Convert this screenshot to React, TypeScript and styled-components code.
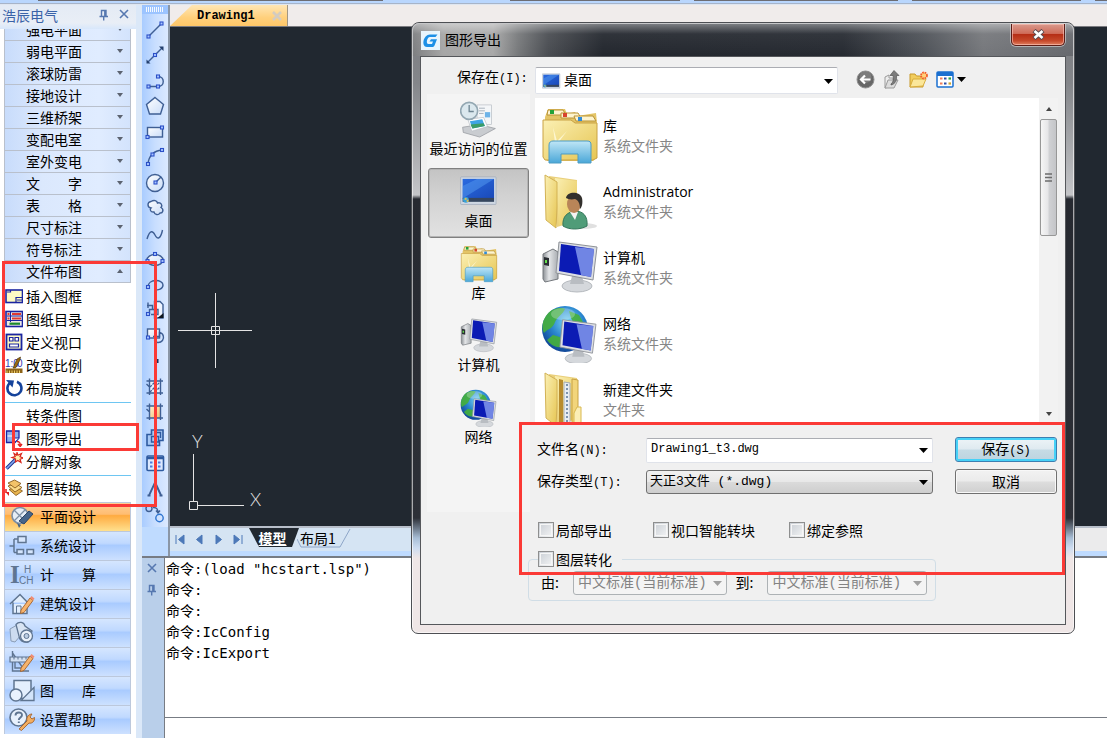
import React from "react";
import styled, { createGlobalStyle } from "styled-components";

const UI = `"Open Sans", "Noto Sans CJK SC", sans-serif`;
const CJK = `"Noto Sans CJK SC", sans-serif`;
const MONO = `"Liberation Mono", "Noto Sans CJK SC", monospace`;
const RED = "#fb3a36";

const GlobalStyle = createGlobalStyle`
  *, *::before, *::after { box-sizing: border-box; }
  body { margin: 0; overflow: hidden; background: #fff; }
  button, input, select { font: inherit; color: inherit; margin: 0; }
  button { padding: 0; border: 0; background: none; }
  svg { display: block; flex: none; }
`;

/* ---------- application shell ---------- */

const Shell = styled.div`
  position: relative;
  display: flex;
  flex-direction: column;
  width: 100%;
  height: 100vh;
  overflow: hidden;
  font: 14px/20px ${CJK};
  color: #000;
`;
const TopStrip = styled.div`
  display: flex;
  gap: 14px;
  flex: none;
  height: 5px;
  padding-left: 38px;
  background: linear-gradient(#b9d6fd 0 3px, #a7b4c8 3px 4px, #dfe6f0 4px);
`;
const StripSegment = styled.span<{ $grow: number; $blank?: boolean }>`
  flex: ${(p) => p.$grow} 0 0;
  height: 1px;
  background: ${(p) => (p.$blank ? "transparent" : "#6c6d74")};
`;
const Body = styled.div`
  display: flex;
  flex: 1;
  min-height: 0;
`;

/* ---------- left palette ---------- */

const Palette = styled.aside`
  display: flex;
  flex-direction: column;
  flex: none;
  width: 136px;
  background: #fff;
`;
const PaletteHeader = styled.header`
  display: flex;
  align-items: center;
  flex: none;
  height: 24px;
  padding: 0 5px 5px 2px;
  background: linear-gradient(#e4ebf5, #e9eef6 18px, #d8e7fb);
  color: #3a63a8;
`;
const PaletteTitle = styled.h2`
  flex: 1;
  margin: 0;
  font: 400 14px/20px ${CJK};
`;
const HeaderButton = styled.button`
  display: flex;
  width: 12px;
  height: 12px;
  margin-left: 8px;
  color: #5678b0;
`;
const GutterButton = styled(HeaderButton)`
  margin-left: 0;
`;
const PaletteBody = styled.div`
  flex: 1;
  min-height: 0;
  overflow: hidden;
  padding: 0 5px 0 4px;
`;
const MenuScroll = styled.nav`
  margin-top: -10px;
`;
const MenuRow = styled.button`
  display: flex;
  align-items: center;
  width: 100%;
  height: 22px;
  padding: 0 7px 2px 21px;
  border: solid #b9c0cc;
  border-width: 0 1px 1px;
  background: linear-gradient(90deg, #c8dcfb, #dbe8fd 30%, #e0ecff 75%, #d3e3fc);
`;
const RowLabel = styled.span`
  flex: 1;
  text-align: left;
  white-space: pre;
`;
const Commands = styled.ul`
  margin: 0;
  padding: 2px 0;
  list-style: none;
`;
const CommandItem = styled.li<{ $ruled?: boolean }>`
  margin-top: ${(p) => (p.$ruled ? "2px" : "0")};
  padding-top: ${(p) => (p.$ruled ? "1px" : "0")};
  border-top: ${(p) => (p.$ruled ? "1px solid #6ec6f2" : "0")};
`;
const CommandButton = styled.button`
  display: flex;
  align-items: center;
  gap: 3px;
  width: 100%;
  height: 23px;
  padding-bottom: 2px;
  white-space: nowrap;
`;
const IconSlot = styled.span`
  width: 18px;
  height: 18px;
  margin-left: 1px;
`;
const CategoryButton = styled.button<{ $active?: boolean }>`
  display: flex;
  align-items: center;
  gap: 5px;
  width: 100%;
  height: 29px;
  padding: 0 0 2px 4px;
  border: solid #bcc8dc;
  border-width: 1px 1px 0;
  white-space: pre;
  background: ${(p) =>
    p.$active
      ? "linear-gradient(#ffcf95, #ffbd72 40%, #ffab40 45%, #ffe08e)"
      : "linear-gradient(#d5e6ff, #c0d9ff 40%, #a9cbff 48%, #cde1ff)"};
`;

/* ---------- workspace ---------- */

const Workspace = styled.main`
  display: flex;
  flex: 1;
  flex-direction: column;
  min-width: 0;
  padding-left: 6px;
  background: linear-gradient(90deg, #dbe8f8 0 6px, #bfdbff 6px);
`;
const DrawingRow = styled.div`
  display: flex;
  flex: 1;
  min-height: 0;
`;
const ToolStrip = styled.div`
  display: flex;
  flex-direction: column;
  flex: none;
  justify-content: space-between;
  align-items: center;
  width: 26px;
  margin-bottom: 29px;
  padding-bottom: 3px;
  background: linear-gradient(90deg, #a9ccff, #c8deff 50%, #dbe9ff);
`;
const Grip = styled.span`
  width: 26px;
  height: 9px;
  padding: 2px 4px;
  background: repeating-linear-gradient(90deg, #f4f9ff 0 1px, transparent 1px 2px) content-box,
    #9cc4ff;
`;
const ToolButton = styled.button`
  display: flex;
  width: 20px;
  height: 20px;
`;
const Sheet = styled.section`
  display: flex;
  flex: 1;
  flex-direction: column;
  min-width: 0;
  border-left: 2px solid #8a96a6;
`;
const TabBar = styled.div`
  flex: none;
  height: 22px;
  background: #f0eceb;
  border-bottom: 1px solid #7b7b80;
`;
const DrawingTab = styled.div`
  display: flex;
  align-items: center;
  width: 118px;
  height: 21px;
  padding-left: 27px;
  clip-path: polygon(0 100%, 22px 0, 100% 0, 100% 100%);
  background: linear-gradient(#ffe6b5, #ffd07c 60%, #ffc768);
  border-right: 1px solid #a09684;
  font: 700 12px/16px ${MONO};
`;
const TabClose = styled.button`
  display: flex;
  width: 10px;
  height: 10px;
  margin-left: 17px;
  color: #d3cbc0;
`;
const Canvas = styled.div`
  position: relative;
  flex: 1;
  min-height: 0;
  overflow: hidden;
  background: #212830;
`;
const Marks = styled.svg`
  position: absolute;
  left: 0;
  bottom: 0;
`;
const LayoutBar = styled.div`
  display: flex;
  align-items: center;
  flex: none;
  height: 25px;
  margin-bottom: 5px;
  padding-left: 5px;
  border-top: 2px solid #b8bfca;
  background: #d5e4f3;
  color: #4d79b8;
`;
const NavButton = styled.button`
  display: flex;
  width: 11px;
  height: 11px;
  margin-right: 8px;
`;
const ModelTab = styled.button`
  align-self: flex-start;
  width: 50px;
  height: 19px;
  margin-left: -2px;
  padding-right: 3px;
  background: #212830;
  clip-path: polygon(0 0, 100% 0, 86% 100%, 20% 100%);
  color: #fff;
  font-weight: 700;
  line-height: 18px;
  text-decoration: underline;
`;
const LayoutTab = styled.button`
  position: relative;
  align-self: flex-start;
  width: 52px;
  height: 19px;
  padding-right: 14px;
  color: #000;
  line-height: 18px;
`;
const TabEdge = styled.svg`
  position: absolute;
  left: -2px;
  top: 0;
`;
const SheetScroll = styled.div`
  flex: 1;
  align-self: stretch;
  margin-left: 80px;
  background: #ebebec;
`;

/* ---------- command window ---------- */

const CommandWindow = styled.section`
  display: flex;
  flex: none;
  height: 182px;
  border-top: 2px solid #777c84;
  background: #fff;
`;
const CommandGutter = styled.div`
  display: flex;
  flex-direction: column;
  align-items: center;
  gap: 9px;
  width: 22px;
  padding-top: 5px;
  background: #b9cfea;
  color: #6384b6;
`;
const CommandMain = styled.div`
  display: flex;
  flex: 1;
  flex-direction: column;
  border-left: 1px solid #777c84;
`;
const History = styled.div`
  flex: 1;
  border-bottom: 1px solid #777c84;
`;
const Line = styled.p`
  margin: 0;
  padding-left: 1px;
  height: 21px;
  font: 14px/20px "DejaVu Sans Mono", monospace;
  white-space: pre;
`;
const Prompt = styled.span`
  font: 14px/20px ${CJK};
`;
const CommandInput = styled.input`
  flex: none;
  width: 100%;
  height: 20px;
  border: 0;
  padding: 0 2px;
  outline: none;
  background: #fff;
`;

/* ---------- dialog ---------- */

const Dialog = styled.section`
  position: absolute;
  left: 411px;
  top: 22px;
  width: 664px;
  padding: 0 8px 8px;
  border: 1px solid #4d4f53;
  border-radius: 8px 8px 7px 7px;
  box-shadow: inset 0 0 0 1px rgba(255, 255, 255, 0.6);
  background: linear-gradient(
    #7b7c80 0,
    #84868a 60px,
    #c4c5c8 172px,
    #262930 176px,
    #2d3037 495px,
    #a8bed6 515px,
    #cddcf0 525px,
    #efe6e6 535px
  );
`;
const TitleBar = styled.header`
  display: flex;
  align-items: flex-start;
  height: 33px;
  margin: 0 -8px;
  padding: 0 8px;
  border: solid #c6c7c9;
  border-width: 1px 1px 0;
  border-radius: 7px 7px 0 0;
  background: linear-gradient(rgba(255, 255, 255, 0.4), rgba(255, 255, 255, 0.06) 10px, transparent),
    linear-gradient(90deg, #7d7e80, #a6a6a6 30px, #a8a8a8 80px, #77797b 105px, #4a4d52 135px, #23272e 190px, #262a31 430px, #4e5258 510px, #75777b 570px, #67696e);
`;
const DialogTitle = styled.h1`
  flex: 1;
  margin: 5px 0 0 5px;
  font: 400 14px/20px ${CJK};
`;
const LogoSlot = styled.span`
  margin-top: 7px;
`;
const CloseButton = styled.button`
  display: flex;
  align-items: center;
  justify-content: center;
  width: 54px;
  height: 22px;
  border: 1px solid #5b1d17;
  border-top: 0;
  border-radius: 0 0 5px 5px;
  box-shadow: inset 0 0 0 1px rgba(255, 200, 190, 0.6), 0 0 0 1px rgba(220, 220, 220, 0.6);
  background: linear-gradient(#d99a8d, #cf6c59 45%, #b52e16 50%, #c6492b 80%, #e08060);
`;
const Client = styled.div`
  padding: 10px 7px 23px 6px;
  border: 1px solid #55575b;
  background: #f0f0f0;
`;
const LookInRow = styled.div`
  display: flex;
  align-items: center;
  height: 27px;
`;
const FieldLabel = styled.label`
  padding-bottom: 2px;
  white-space: nowrap;
`;
const LookInLabel = styled(FieldLabel)`
  flex: none;
  width: 108px;
  padding: 0 0 8px 30px;
`;
const Key = styled.span`
  font: 12px/16px ${MONO};
`;
const ComboWrap = styled.div<{ $width?: number }>`
  position: relative;
  width: ${(p) => (p.$width ? `${p.$width}px` : "auto")};
`;
const Arrow = styled.svg`
  position: absolute;
  right: 5px;
  top: 50%;
  margin-top: -2px;
  pointer-events: none;
`;
const ComboIcon = styled.span`
  position: absolute;
  left: 7px;
  top: 6px;
  pointer-events: none;
`;
const PlainSelect = styled.select`
  appearance: none;
  width: 100%;
  height: 27px;
  padding: 0 20px 3px 28px;
  border: 1px solid #e0e3ea;
  border-top-color: #abadb3;
  border-radius: 2px;
  background: #fff;
`;
const DialogTools = styled.div`
  display: flex;
  align-items: center;
  gap: 8px;
  margin-left: 18px;
  padding-bottom: 2px;
`;
const DialogTool = styled.button`
  display: flex;
  align-items: center;
  gap: 3px;
  height: 20px;
`;
const Browser = styled.div`
  display: flex;
  align-items: flex-start;
  gap: 5px;
`;
const Places = styled.nav`
  display: flex;
  flex-direction: column;
  flex: none;
  gap: 2px;
  width: 103px;
  height: 418px;
  padding: 2px 1px;
  background: #f4f4f4;
`;
const Place = styled.button<{ $selected?: boolean }>`
  display: flex;
  flex-direction: column;
  align-items: center;
  width: 101px;
  height: 70px;
  padding-top: 4px;
  border: 1px solid ${(p) => (p.$selected ? "#808080" : "transparent")};
  border-radius: 3px;
  box-shadow: ${(p) => (p.$selected ? "inset 0 0 0 1px #b4b4b4" : "none")};
  background: ${(p) => (p.$selected ? "linear-gradient(#c4c4c4, #d2d2d2 40%, #e2e2e2)" : "none")};
  line-height: 18px;
  white-space: nowrap;
`;
const PlaceIcon = styled.span`
  display: flex;
  align-items: center;
  height: 38px;
`;
const Pane = styled.div`
  flex: 1;
  min-width: 0;
  padding-top: 4px;
`;
const FileArea = styled.div`
  display: flex;
  height: 326px;
  background: #fff;
`;
const FileList = styled.ul`
  flex: 1;
  margin: 0;
  padding: 5px 0 0 6px;
  overflow: hidden;
  list-style: none;
`;
const FileRow = styled.li`
  display: flex;
  align-items: center;
  gap: 4px;
  height: 66px;
`;
const FileText = styled.div`
  display: flex;
  flex-direction: column;
  font: 14px/20px ${UI};
`;
const FileKind = styled.span`
  color: #868686;
`;
const ScrollBar = styled.div`
  display: flex;
  flex-direction: column;
  align-items: center;
  flex: none;
  width: 19px;
  background: #f2f2f2;
`;
const ScrollButton = styled.button`
  display: flex;
  align-items: center;
  justify-content: center;
  width: 17px;
  height: 21px;
`;
const Thumb = styled.div`
  display: flex;
  align-items: center;
  justify-content: center;
  width: 17px;
  height: 117px;
  border: 1px solid #979797;
  border-radius: 2px;
  background: linear-gradient(90deg, #f6f6f6, #e6e6e8 45%, #d0d1d4 55%, #c4c5c8);
`;
const Spacer = styled.span`
  flex: 1;
`;
const FormGrid = styled.div`
  display: grid;
  grid-template-columns: 109px 287px 102px;
  grid-auto-rows: 25px;
  align-items: center;
  row-gap: 7px;
  padding: 13px 0 0 2px;
`;
const NameInput = styled.input`
  width: 100%;
  height: 25px;
  padding: 0 20px 2px 4px;
  border: 1px solid #e0e3ea;
  border-top-color: #abadb3;
  border-radius: 2px;
  background: #fff;
  font: 12px/16px ${MONO};
`;
const TypeSelect = styled.select`
  appearance: none;
  width: 100%;
  height: 24px;
  padding: 0 20px 0 3px;
  border: 1px solid #707070;
  border-radius: 3px;
  background: linear-gradient(#f1f1f1, #e8e8e8 48%, #dadada 52%, #cecece);
  font: 13px/18px ${MONO};
`;
const PushButton = styled.button<{ $primary?: boolean }>`
  width: 102px;
  height: 25px;
  margin-left: 22px;
  padding-bottom: 2px;
  border: 1px solid ${(p) => (p.$primary ? "#3c7fb1" : "#707070")};
  border-radius: 3px;
  box-shadow: ${(p) => (p.$primary ? "inset 0 0 0 2px #46d1f7" : "inset 0 0 0 1px #f8f8f8")};
  background: ${(p) =>
    p.$primary ? "linear-gradient(#edf4f7, #dfeaf0 48%, #c6dbe5 52%, #bcd3df)" : "linear-gradient(#f2f2f2, #ebebeb 48%, #dddddd 52%, #cfcfcf)"};
`;
const Checks = styled.div`
  display: grid;
  grid-template-columns: 115px 136px auto;
  align-items: center;
  height: 24px;
  margin-top: 24px;
  padding-left: 3px;
`;
const CheckLabel = styled.label`
  display: flex;
  align-items: center;
  gap: 2px;
  height: 24px;
  white-space: nowrap;
`;
const CheckBox = styled.input`
  appearance: none;
  width: 16px;
  height: 16px;
  border: 1px solid #8e8f8f;
  outline: 1px solid #f6f6f6;
  outline-offset: -3px;
  background: linear-gradient(135deg, #c9ced4, #f4f5f6);
`;
const LayerGroup = styled.fieldset`
  width: 408px;
  min-width: 0;
  margin: 5px 0 0 -7px;
  padding: 0 8px 5px 9px;
  border: 1px solid #d0dde6;
  border-radius: 4px;
`;
const LayerLegend = styled.legend`
  padding: 0 10px 0 0;
`;
const LayerRow = styled.div`
  display: flex;
  align-items: center;
  padding-left: 3px;
`;
const StandardLabel = styled(FieldLabel)`
  width: 32px;
`;
const StandardSelect = styled.select`
  appearance: none;
  width: 100%;
  height: 24px;
  padding: 0 16px 0 4px;
  border: 1px solid #adb2b5;
  border-radius: 3px;
  background: #f4f4f4;
  color: #838383;
  opacity: 1;
  font: 14px/18px ${MONO};
`;
const Gap = styled.span`
  width: 9px;
`;
const Highlight = styled.div<{ $x: number; $y: number; $w: number; $h: number }>`
  position: absolute;
  left: ${(p) => p.$x}px;
  top: ${(p) => p.$y}px;
  width: ${(p) => p.$w}px;
  height: ${(p) => p.$h}px;
  border: 3px solid ${RED};
  pointer-events: none;
`;
const Defs = styled.svg`
  position: absolute;
`;

/* ---------- small glyphs ---------- */

const Caret = ({ up, color = "#5c6370" }: { up?: boolean; color?: string }) => (
  <svg width="6" height="4" viewBox="0 0 6 4">
    <path d={up ? "M0 4L3 0L6 4z" : "M0 0H6L3 4z"} fill={color} />
  </svg>
);
const DropArrow = ({ color = "#000" }: { color?: string }) => (
  <Arrow width="9" height="5" viewBox="0 0 9 5">
    <path d="M0 0H9L4.500 5z" fill={color} />
  </Arrow>
);
const Cross = ({ size = 10, w = 2 }: { size?: number; w?: number }) => (
  <svg width={size} height={size} viewBox="0 0 10 10" stroke="currentColor" strokeWidth={w} fill="none">
    <path d="M1 1L9 9M9 1L1 9" />
  </svg>
);
const Pin = () => (
  <svg width="10" height="12" viewBox="0 0 10 12" stroke="currentColor" strokeWidth="1.400" fill="none">
    <path d="M2.500 7V1.500H7V7M5.800 1.500V7M0.500 7.500H9M4.700 7.500V11.500" />
  </svg>
);

/* ---------- drawing tool icons ---------- */

const Node = ({ x, y }: { x: number; y: number }) => (
  <rect x={x - 1.5} y={y - 1.5} width="3" height="3" fill="#a9c6ff" stroke="#2c50c8" strokeWidth="1.100" />
);

const tools: { name: string; art: React.ReactNode }[] = [
  { name: "直线", art: (<><path d="M4 16L16 4" /><Node x={3.5} y={16.5} /><Node x={16.5} y={3.5} /></>) },
  { name: "构造线", art: (<><path d="M3 17L17 3" /><path d="M1.500 14.500V18.500H5.500zM14 1.500H18.500V6z" fill="#25406e" stroke="none" /><Node x={10} y={10} /></>) },
  { name: "多段线", art: (<><path d="M4 15.500H13C20 15.500 20 5.500 13 5.500" /><Node x={3.5} y={15.500} /><Node x={13} y={15.500} /><Node x={13} y={5.500} /></>) },
  { name: "正多边形", art: <path d="M10 1.500L18.500 8.500L15.500 18H4.500L1.500 8.500z" fill="url(#paper)" /> },
  { name: "矩形", art: (<><rect x="2.500" y="5.500" width="15" height="9.500" fill="url(#paper)" /><Node x={2.5} y={15} /><Node x={17} y={5.5} /></>) },
  { name: "圆弧", art: (<><path d="M3 17C3.500 9 9 3.500 17 3" /><Node x={3} y={17} /><Node x={7.5} y={7.5} /><Node x={17} y={3} /></>) },
  { name: "圆", art: (<><circle cx="10" cy="10" r="8.500" fill="url(#paper)" /><path d="M10.500 9.500L16 4" /><Node x={10.5} y={9.5} /></>) },
  { name: "修订云线", art: <path d="M6 3.500C9 1.500 12 2.500 12.500 5C16 4 18 7.500 16 9.500C19.500 11.500 17.500 15.500 15 15C13.500 17.500 9.500 17 9 14C5.500 14.500 4.500 11.500 6 10C2 9.500 2 4 6 3.500z" fill="url(#paper)" /> },
  { name: "样条曲线", art: <path d="M2 15C5 5 8 7 10 11C12.500 16.500 16 14 17.500 6" /> },
  { name: "椭圆", art: (<><ellipse cx="10" cy="11" rx="8" ry="5.500" fill="url(#paper)" /><Node x={10} y={5} /><Node x={2.5} y={12} /><Node x={17.5} y={12} /></>) },
  { name: "椭圆弧", art: (<><path d="M3 12C3 3.500 18 4 18 10C18 14 13 15.500 10 14.500" /><Node x={3} y={12} /></>) },
  { name: "插入块", art: (<><path d="M9.500 1.500H15L18 4.500V18H9.500z" fill="#eef4ff" /><path d="M2 5.500H7.500V9.500H13V14.500H6M7.500 9.500H4.500V14M3 2.500V8" /><path d="M12.500 18H18.500V13z" fill="#101820" stroke="none" /><Node x={3} y={14} /></>) },
  { name: "创建块", art: (<><rect x="2.500" y="3" width="12" height="9" fill="url(#paper)" /><path d="M8 10.500H14.500V6.500C18.500 7 19.500 12 17.500 14.500C15 17.500 10 17 9.500 14" /><Node x={3} y={11.5} /></>) },
  { name: "点", art: <rect x="10.500" y="8" width="3" height="4" fill="#1d2d55" stroke="none" /> },
  { name: "图案填充", art: (<><rect x="4.500" y="4" width="11" height="12" fill="#e4eefe" stroke="none" /><path d="M1.500 4H18M1.500 16H18M4.500 1.500V18M15.500 1.500V18M1.500 7L4.500 10" /><path d="M5 10L10 5M5 15L15 5M10 15L15 10" strokeDasharray="2.500 1" strokeWidth="1.200" /></>) },
  { name: "渐变色", art: (<><rect x="5" y="4" width="11" height="12" fill="url(#sand)" stroke="none" /><path d="M1.500 4H18M1.500 16H18M4.500 1.500V18M15.500 1.500V18M1.500 7L4.500 10" /></>) },
  { name: "面域", art: (<><path d="M6.500 2H18V12.500H14.500V17.500H2V6.500H6.500z" fill="#a8c9f5" stroke="#2f5ba0" strokeWidth="1.600" /><path d="M6.500 8.500H13.500V14H6.500zM9 4.500H15.500V10" stroke="#2f5ba0" /></>) },
  { name: "表格", art: (<><rect x="2" y="3" width="16.500" height="14.500" rx="1" fill="#dce9ff" stroke="#2f5ba0" strokeWidth="1.600" /><path d="M2 5H18" stroke="#2f5ba0" strokeWidth="2.500" /><path d="M5 9.500H7.500M9 9.500H11.500M13 9.500H15.500M5 13.500H7.500M9 13.500H11.500M13 13.500H15.500" stroke="#4f7be0" strokeWidth="2.200" /></>) },
  { name: "多行文字", art: <path d="M4 16.500L10 3.500L16 16.500M14.500 16.500H17.500M2.500 16.500H5.500M11 5L16 16" strokeWidth="1.800" /> },
  { name: "添加选定对象", art: (<><circle cx="4" cy="4.500" r="3" /><path d="M8 3.500C12 3 13 6 13 8M11 6.500L13 9L15 6.500" /><circle cx="14.500" cy="14" r="3.700" stroke="#2f75d0" /></>) },
];

/* ---------- palette command icons ---------- */

const NAVY = "#1b25a0";
const commandIcons: Record<string, React.ReactNode> = {
  frame: (<><rect x="1" y="3" width="16.500" height="12.500" fill="#fdfbc4" stroke={NAVY} strokeWidth="1.600" /><path d="M2 5H5.500V3M17 10.500H11V15" stroke={NAVY} fill="none" strokeWidth="1.200" /><path d="M12 13H17" stroke={NAVY} /></>),
  catalog: (<><rect x="1" y="1.500" width="16.500" height="15" fill="#ece9e6" stroke={NAVY} strokeWidth="1.600" /><path d="M2 6H17M2 10.500H17M5.500 2V12" stroke={NAVY} /><path d="M2.500 4H4.500M7 4H16M2.500 8.500H4.500M7 8.500H16" stroke="#e0392f" strokeWidth="1.800" /><path d="M4.500 13.700H15" stroke="#1c8a2c" strokeWidth="2.200" /></>),
  viewport: (<><rect x="1.500" y="1.500" width="15" height="15" fill="#fdfbc4" stroke={NAVY} strokeWidth="1.800" /><path d="M4.500 4.500H8V8H4.500zM10 4.500H13.500V8H10zM4.500 11H13.500V14H4.500z" fill="#fff" stroke={NAVY} strokeWidth="1.200" /></>),
  scale: (<><rect x="0.500" y="12.500" width="17" height="4.500" fill="#8c6318" /><path d="M2 14.500V17M4.500 14.500V17M7 14.500V17M9.500 14.500V17M12 14.500V17M14.500 14.500V17" stroke="#f2d36a" /><text x="0" y="11" fontFamily="Liberation Sans" fontSize="10" fill="#3136b5">1:0</text><text x="12" y="11" fontFamily="Liberation Sans" fontSize="10" fill="#3136b5">0</text><path d="M8 12L12 3L15.500 1L15 4L10.500 12z" fill="#9a6a12" stroke="#3d2b06" strokeWidth="0.600" /></>),
  rotate: (<><path d="M5.500 3.500A7 7 0 1 0 12 2.800" fill="none" stroke="#15439b" strokeWidth="2.600" /><path d="M1 1L9 1.500L7.500 8.500z" fill="#15439b" /></>),
  none: null,
  export: (<><path d="M1.500 2H14V9L10 13.500H1.500z" fill="#8fb0ee" stroke={NAVY} strokeWidth="1.300" /><path d="M2.500 7H8V3" stroke="#fff" fill="none" /><path d="M9 13V9H14" fill="#fff" stroke={NAVY} /><path d="M12 12.500C14.500 12.500 15.500 14.500 15 16M13 15L15.200 17.500L17 15" stroke="#e02020" fill="none" strokeWidth="1.400" /></>),
  explode: (<><path d="M1.500 16.500L10.500 7.500" stroke="#1c2f8f" strokeWidth="3.600" /><path d="M1.500 16.500L10.500 7.500" stroke="#83abf0" strokeWidth="1.600" /><path d="M12 0.500L13 3.200L16.500 1.500L15 4.800L18 6L15 7.300L16 10.500L12.800 8.500L10.500 10L10.500 6.800L7 5.500L10.200 4.500L9 1.500L11.500 3z" fill="#fff1b0" stroke="#d8261c" strokeWidth="1.200" /></>),
  layers: (<><path d="M4 10.500L11 8L17.500 12L11 16.500z" fill="#e9b54f" stroke="#7b4f12" strokeWidth="0.800" /><path d="M3 7L10.500 4.500L17 8.500L10 13z" fill="#fbd988" stroke="#7b4f12" strokeWidth="0.800" /><path d="M3 4L9.500 1L16 4.500L10 9z" fill="#f3c369" stroke="#7b4f12" strokeWidth="0.800" /><path d="M1 10V14" stroke="#e02020" strokeWidth="1.500" /><path d="M0.500 13L4 17V13z" fill="#e02020" /></>),
};

const commands: { label: string; icon: string; ruled?: boolean }[] = [
  { label: "插入图框", icon: "frame" },
  { label: "图纸目录", icon: "catalog" },
  { label: "定义视口", icon: "viewport" },
  { label: "改变比例", icon: "scale" },
  { label: "布局旋转", icon: "rotate" },
  { label: "转条件图", icon: "none", ruled: true },
  { label: "图形导出", icon: "export" },
  { label: "分解对象", icon: "explode" },
  { label: "图层转换", icon: "layers", ruled: true },
];

const menuRows = ["强电平面", "弱电平面", "滚球防雷", "接地设计", "三维桥架", "变配电室", "室外变电", "文　　字", "表　　格", "尺寸标注", "符号标注"];

/* ---------- category icons ---------- */

const SLATE = "#5f7591";
const pencil = (
  <>
    <path d="M12 18L21 6L24 8.500L15 20.500L11.500 21.500z" fill="#f6b36c" stroke="#a5622a" strokeWidth="0.900" />
    <path d="M21 6L22.500 4L25.500 6.500L24 8.500z" fill="#f08c72" />
  </>
);
const categories: { label: string; active?: boolean; art: React.ReactNode }[] = [
  { label: "平面设计", active: true, art: (<><circle cx="11" cy="10.500" r="8" fill="#e6eef6" stroke="#7d8fa4" strokeWidth="1.600" /><path d="M5 5L16 16M16 5L5 16" stroke="#7d8fa4" strokeWidth="1.300" /><path d="M10 16L20 6L24 9L15 19z" fill="#46658a" stroke="#2b4566" /><path d="M8 18L12 20L10 23z" fill="#46658a" /></>) },
  { label: "系统设计", art: <path d="M5 12H0.500M5 5V18.500M5 5H9M5 18.500H8M9 2.500H17V8.500H9zM8 15.500H14.500V20H8zM18 15.500H24.500V20H18z" fill="#dbe9fb" fillOpacity="0.800" stroke={SLATE} strokeWidth="1.500" /> },
  { label: "计　　算", art: (<><text x="1" y="20" fontFamily="Liberation Serif" fontWeight="700" fontSize="25" fill={SLATE}>I</text><text x="15" y="10" fontFamily="Liberation Sans" fontSize="10" fill={SLATE}>H</text><text x="10" y="21" fontFamily="Liberation Sans" fontSize="10" fill={SLATE}>CH</text></>) },
  { label: "建筑设计", art: (<><path d="M1 12L11 2.500L20 12M4 10.500V21.500H18V10.500" fill="#e2eefc" stroke={SLATE} strokeWidth="1.500" /><path d="M7.500 21V14H12V21" fill="none" stroke={SLATE} />{pencil}</>) },
  { label: "工程管理", art: (<><path d="M1 8L8 4L12 14L6 21L2 20z" fill="#cddcf0" stroke="#8a9db6" /><path d="M7 3.500C10 0 15 1 16 5L23 10L19 21C14 22 10 19 10 15z" fill="#d8e4f3" stroke={SLATE} strokeWidth="1.300" /><circle cx="17.500" cy="15" r="6" fill="#eaf1fa" stroke={SLATE} strokeWidth="1.300" /><circle cx="17.500" cy="15" r="2.500" fill="#bccde2" stroke={SLATE} /></>) },
  { label: "通用工具", art: (<><path d="M3.500 1V21H20M3.500 3L14 18H6V10" fill="none" stroke={SLATE} strokeWidth="1.400" /><path d="M1 7H20V12H1z" fill="#d3e1f3" stroke={SLATE} strokeWidth="1.200" /><path d="M5 7V9.500M9 7V9.500M13 7V9.500M17 7V9.500" stroke={SLATE} />{pencil}</>) },
  { label: "图　　库", art: (<><path d="M5 1.500H22V19.500H5z" fill="#e4effd" stroke={SLATE} strokeWidth="1.500" /><path d="M25 8.500L12 21.500H25z" fill="#d3e4fa" stroke={SLATE} strokeWidth="1.300" /><circle cx="7" cy="16" r="6" fill="#e9f2fe" stroke={SLATE} strokeWidth="1.500" /></>) },
  { label: "设置帮助", art: (<><circle cx="9.500" cy="9.500" r="8.500" fill="#e8f1fd" stroke={SLATE} strokeWidth="1.600" /><path d="M6.500 7.500C6.500 3.500 13 3.500 13 7C13 9.500 9.800 9.500 9.800 12M9.800 13.500V15" fill="none" stroke={SLATE} strokeWidth="1.900" /><path d="M10 21L18 13C17 9 20 6 23 6L21 9L23 11L25.500 9.500C26 13 23 16 20 15L12.500 22.500z" fill="#f3ae62" stroke="#a5622a" strokeWidth="0.900" /></>) },
];

/* ---------- shell item pictures (56 x 56 grid) ---------- */

const Library = () => (
  <>
    <path d="M4 10L7 2H24L26 7L34 5L36 9L55 6L56 16V50L52 54H6L3 50z" fill="#e3c466" />
    <path d="M7 3H22L25 8H6z" fill="#fdf4cf" stroke="#b99337" />
    <path d="M20 6H37L40 11H20z" fill="#fdf4cf" stroke="#b99337" />
    <path d="M33 9H52L55 14H35z" fill="#fdf4cf" stroke="#b99337" />
    <rect x="9" y="3" width="4" height="4" fill="#23a238" />
    <rect x="22" y="6" width="4" height="4" fill="#d8432c" />
    <rect x="37" y="10" width="4" height="4" fill="#2f8bd8" />
    <path d="M2 13H30L34 16H56V51L52 53H4L2 50z" fill="url(#folder)" stroke="#c9a244" />
    <path d="M14 36L12 20L16 34L26 24L17 36z" fill="#fffbe0" opacity="0.800" />
    <path d="M8 38C8 35 10 34 12 34H46C49 34 50 35 50 38V56H37V47H20V56H8z" fill="url(#stand)" stroke="#4c9cc4" />
  </>
);
const OpenFolder = () => (
  <>
    <path d="M8 3L36 7V48L16 54z" fill="#ead07c" />
    <path d="M14 5L36 8V48L18 52z" fill="url(#folder)" />
    <path d="M4 2L16 9V34L15 55L5 47z" fill="url(#folder)" stroke="#d2b255" />
  </>
);
const User = () => (
  <>
    <OpenFolder />
    <ellipse cx="42" cy="53" rx="14" ry="3" fill="#000" opacity="0.120" />
    <path d="M22 53C21 43 27 39 34 38C42 38 47 43 46 53C39 57 28 57 22 53z" fill="#4f9c78" stroke="#33765a" />
    <path d="M29 39L34 47L37 39z" fill="#f3f3f3" />
    <ellipse cx="33" cy="31" rx="7" ry="9" fill="#b98558" />
    <path d="M25 25C26 18 39 18 41 25C42 30 41 34 39 36C39 30 37 27 34 26C30 27 27 26 25 25z" fill="#33302d" />
  </>
);
const Screen = ({ x = 0, y = 0 }: { x?: number; y?: number }) => (
  <g transform={`translate(${x} ${y})`}>
    <ellipse cx="22" cy="46" rx="15" ry="6" fill="#d5d8dc" stroke="#b5b9be" />
    <path d="M17 36H27L29 44H15z" fill="#b9bdc2" />
    <path d="M4 2L42 7L38 40L1 33z" fill="#dcdfe4" stroke="#8e9297" />
    <path d="M6 4L39 9L36 37L4 31z" fill="#0b1bb4" />
    <path d="M20 7L39 9L36 37L26 35z" fill="#93a9f4" opacity="0.750" />
  </g>
);
const Computer = () => (
  <>
    <path d="M2 15L12 10L17 13V40L4 43L2 40z" fill="url(#metal)" stroke="#74787d" />
    <path d="M3 18L8 19V27L3 26z" fill="#2b2f33" />
    <rect x="4" y="21" width="2" height="3" fill="#63e04c" />
    <Screen x={14} y={1} />
  </>
);
const Globe = () => (
  <>
    <circle cx="24" cy="24" r="23" fill="url(#globe)" />
    <path d="M5 11C10 3 20 2 24 4C22 9 16 12 14 17C12 24 6 24 3 28C0 22 2 15 5 11zM28 6L38 10L43 19L34 21L30 13zM12 30L22 33L20 42C14 43 9 39 6 35z" fill="#46b03a" opacity="0.900" />
    <ellipse cx="22" cy="9" rx="12" ry="6" fill="#fff" opacity="0.250" />
    <g transform="translate(18 13) scale(0.880)"><Screen /></g>
  </>
);
const DocsFolder = () => (
  <>
    <OpenFolder />
    <path d="M18 8L22 9V54L18 54z" fill="#b88c2d" />
    <path d="M23 11L29 12V54H23z" fill="#e9eef2" stroke="#a5abb2" />
    <path d="M26 13V54" stroke="#7c93ad" strokeWidth="2" strokeDasharray="2 2" />
    <path d="M31 8L37 9V54H31z" fill="#f2d57b" stroke="#c8a244" />
    <path d="M36 36H40V54H33V42z" fill="#fbeeb6" stroke="#d9b84f" />
  </>
);
const Desktop = () => (
  <>
    <rect x="1" y="6" width="54" height="42" rx="1" fill="#cfd8e3" stroke="#98a5b5" />
    <rect x="4" y="9" width="48" height="30" fill="url(#desk)" />
    <path d="M4 39L4 20L26 9H52z" fill="#5aa2f4" opacity="0.450" />
    <rect x="4" y="38" width="48" height="6" fill="#36465e" />
    <circle cx="9" cy="41" r="4.500" fill="#38a0d8" />
    <path d="M7 40H9V38M10 43H12V41" stroke="#f4c13d" strokeWidth="2" fill="none" />
  </>
);
const Recent = () => (
  <>
    <path d="M4 40L30 36L54 42L30 55L5 48z" fill="#c9ccd0" stroke="#8d9196" />
    <rect x="26" y="6" width="22" height="30" fill="#f4f6f8" stroke="#b4bac1" />
    <path d="M29 11H38M29 15H38M29 19H36" stroke="#a8b2bd" strokeWidth="1.500" />
    <rect x="38" y="17" width="8" height="8" fill="#6db3e8" />
    <path d="M12 28L36 25L42 39L18 46z" fill="#fff" stroke="#b4bac1" />
    <path d="M15 31L34 28L38 38L19 42z" fill="#3fa4e4" />
    <path d="M16 36L36 34L38 38L19 42z" fill="#3c9c68" />
    <circle cx="14" cy="15" r="13" fill="#dbe8ee" stroke="#93a7b2" strokeWidth="2.500" />
    <path d="M14 6V16H21" stroke="#6e8592" strokeWidth="2" fill="none" />
  </>
);
const Picture = ({ size, children }: { size: number; children: React.ReactNode }) => (
  <svg width={size} height={size} viewBox="0 0 58 58" fill="none">{children}</svg>
);

const places = [
  { label: "最近访问的位置", art: <Recent /> },
  { label: "桌面", art: <Desktop />, selected: true },
  { label: "库", art: <Library /> },
  { label: "计算机", art: <Computer /> },
  { label: "网络", art: <Globe /> },
];
const files = [
  { name: "库", kind: "系统文件夹", art: <Library /> },
  { name: "Administrator", kind: "系统文件夹", art: <User /> },
  { name: "计算机", kind: "系统文件夹", art: <Computer /> },
  { name: "网络", kind: "系统文件夹", art: <Globe /> },
  { name: "新建文件夹", kind: "文件夹", art: <DocsFolder /> },
];

const history = ['(load "hcstart.lsp")', "", "", "IcConfig", "IcExport"];

const navPaths = ["M1 1V10M9 1L3.500 5.500L9 10z", "M8 1L2.500 5.500L8 10z", "M3 1L8.500 5.500L3 10z", "M10 1V10M2 1L7.500 5.500L2 10z"];
const navNames = ["第一个", "上一个", "下一个", "最后一个"];

const Gradients = () => (
  <Defs width="0" height="0" aria-hidden="true">
    <defs>
      <linearGradient id="paper" x1="0" y1="0" x2="1" y2="1"><stop offset="0" stopColor="#fff" /><stop offset="1" stopColor="#c9dcf8" /></linearGradient>
      <linearGradient id="sand" x1="0" y1="0" x2="1" y2="1"><stop offset="0" stopColor="#fff0cf" /><stop offset="1" stopColor="#f0bb69" /></linearGradient>
      <linearGradient id="folder" x1="0" y1="0" x2="1" y2="1"><stop offset="0" stopColor="#fbf0b4" /><stop offset="1" stopColor="#e6c552" /></linearGradient>
      <linearGradient id="stand" x1="0" y1="0" x2="0" y2="1"><stop offset="0" stopColor="#bfe6f6" /><stop offset="1" stopColor="#4aa7d8" /></linearGradient>
      <linearGradient id="metal" x1="0" y1="0" x2="1" y2="0"><stop offset="0" stopColor="#8c9095" /><stop offset="0.400" stopColor="#e4e6e8" /><stop offset="1" stopColor="#a9adb2" /></linearGradient>
      <linearGradient id="desk" x1="0" y1="0" x2="1" y2="1"><stop offset="0" stopColor="#2a6be0" /><stop offset="1" stopColor="#1a49b8" /></linearGradient>
      <radialGradient id="globe" cx="0.550" cy="0.350" r="0.700"><stop offset="0" stopColor="#7fd8f4" /><stop offset="0.500" stopColor="#2a86cf" /><stop offset="1" stopColor="#0d3d8f" /></radialGradient>
    </defs>
  </Defs>
);

const ExportDialog = () => (
  <Dialog role="dialog" aria-labelledby="dialog-title">
    <TitleBar>
      <LogoSlot>
        <svg width="19" height="19" viewBox="0 0 19 19">
          <rect width="19" height="19" fill="#e9f5fd" />
          <path d="M16.500 3.500L14.500 6H9C6 6 4.500 13 7.500 13H11L12 10.500H8.500L10 8.300H16L13.500 14.500C13 15.500 12 16 11 16H6C0 16 2 3.500 9 3.500z" fill="#1d8fe6" />
        </svg>
      </LogoSlot>
      <DialogTitle id="dialog-title">图形导出</DialogTitle>
      <CloseButton type="button" aria-label="关闭">
        <svg width="13" height="11" viewBox="0 0 13 11" fill="none">
          <path d="M2 1.500L11 9.500M11 1.500L2 9.500" stroke="#5a4a50" strokeWidth="4.500" />
          <path d="M2.500 2L10.500 9M10.500 2L2.500 9" stroke="#fff" strokeWidth="2.600" />
        </svg>
      </CloseButton>
    </TitleBar>
    <Client>
      <LookInRow>
        <LookInLabel htmlFor="look-in">保存在<Key>(I):</Key></LookInLabel>
        <ComboWrap $width={303}>
          <PlainSelect id="look-in"><option>桌面</option></PlainSelect>
          <ComboIcon><svg width="19" height="16" viewBox="0 4 58 46" preserveAspectRatio="none"><Desktop /></svg></ComboIcon>
          <DropArrow />
        </ComboWrap>
        <DialogTools>
          <DialogTool type="button" aria-label="后退">
            <svg width="19" height="19" viewBox="0 0 19 19" fill="none"><circle cx="9.500" cy="9.500" r="8.500" fill="#666" stroke="#8f8f8f" /><circle cx="9.500" cy="7" r="6" fill="#8c8c8c" opacity="0.600" /><path d="M14.500 9.500H5.500M9 5.500L5 9.500L9 13.500" stroke="#fff" strokeWidth="2.200" /></svg>
          </DialogTool>
          <DialogTool type="button" aria-label="上一级">
            <svg width="18" height="19" viewBox="0 0 18 19"><path d="M2 18V7L6 5V8H10V16z" fill="#ededed" stroke="#9a9a9a" /><path d="M2 18L5 10H15L11 18z" fill="#dcdcdc" stroke="#9a9a9a" /><path d="M8 14C10.500 12 11 9 10 5.500H7L11 0.500L16 5.500H13.500C14 10 12.500 14 8 15z" fill="#7c7c7c" stroke="#555" strokeWidth="0.700" /></svg>
          </DialogTool>
          <DialogTool type="button" aria-label="新建文件夹">
            <svg width="19" height="18" viewBox="0 0 19 18"><path d="M1 3H6L7.500 5H14V16H1z" fill="#f1cd5d" stroke="#c99a2c" /><path d="M1 16L4 8H17L14 15z" fill="#fbe79a" stroke="#d8ad3d" /><circle cx="15" cy="4.500" r="3" fill="#ffd27a" stroke="#f25c2a" strokeWidth="1.800" strokeDasharray="1.600 0.800" /></svg>
          </DialogTool>
          <DialogTool type="button" aria-label="视图">
            <svg width="18" height="17" viewBox="0 0 18 17"><rect x="1" y="1" width="16" height="15" rx="1" fill="#fff" stroke="#1a6fd0" strokeWidth="1.500" /><rect x="1" y="1" width="16" height="4" fill="#1a6fd0" /><path d="M4 7.500H6.500M4 12.500H6.500" stroke="#ee7d58" strokeWidth="2.200" /><path d="M8 7.500H10.500M8 12.500H10.500" stroke="#2b4fa8" strokeWidth="2.200" /><path d="M12.500 7.500H15" stroke="#29a04a" strokeWidth="2.200" /><path d="M12.500 12.500H15" stroke="#d0a52c" strokeWidth="2.200" /></svg>
            <svg width="9" height="5" viewBox="0 0 9 5"><path d="M0 0H9L4.500 5z" /></svg>
          </DialogTool>
        </DialogTools>
      </LookInRow>
      <Browser>
        <Places aria-label="位置">
          {places.map((p) => (
            <Place key={p.label} type="button" $selected={p.selected}>
              <PlaceIcon><Picture size={38}>{p.art}</Picture></PlaceIcon>
              {p.label}
            </Place>
          ))}
        </Places>
        <Pane>
          <FileArea>
            <FileList>
              {files.map((f) => (
                <FileRow key={f.name}>
                  <Picture size={58}>{f.art}</Picture>
                  <FileText><span>{f.name}</span><FileKind>{f.kind}</FileKind></FileText>
                </FileRow>
              ))}
            </FileList>
            <ScrollBar>
              <ScrollButton type="button" aria-label="向上滚动"><Caret up color="#444" /></ScrollButton>
              <Thumb>
                <svg width="7" height="9" viewBox="0 0 7 9"><path d="M0 1H7M0 4.500H7M0 8H7" stroke="#6c6c6c" strokeWidth="1.500" /></svg>
              </Thumb>
              <Spacer />
              <ScrollButton type="button" aria-label="向下滚动"><Caret color="#444" /></ScrollButton>
            </ScrollBar>
          </FileArea>
          <FormGrid>
            <FieldLabel htmlFor="file-name">文件名<Key>(N):</Key></FieldLabel>
            <ComboWrap>
              <NameInput id="file-name" type="text" defaultValue="Drawing1_t3.dwg" />
              <DropArrow />
            </ComboWrap>
            <PushButton type="button" $primary>保存<Key>(S)</Key></PushButton>
            <FieldLabel htmlFor="file-type">保存类型<Key>(T):</Key></FieldLabel>
            <ComboWrap>
              <TypeSelect id="file-type"><option>天正3文件 (*.dwg)</option></TypeSelect>
              <DropArrow />
            </ComboWrap>
            <PushButton type="button">取消</PushButton>
          </FormGrid>
          <Checks>
            <CheckLabel><CheckBox type="checkbox" />局部导出</CheckLabel>
            <CheckLabel><CheckBox type="checkbox" />视口智能转块</CheckLabel>
            <CheckLabel><CheckBox type="checkbox" />绑定参照</CheckLabel>
          </Checks>
          <LayerGroup>
            <LayerLegend><CheckLabel><CheckBox type="checkbox" />图层转化</CheckLabel></LayerLegend>
            <LayerRow>
              <StandardLabel htmlFor="std-from">由:</StandardLabel>
              <ComboWrap $width={154}>
                <StandardSelect id="std-from" disabled><option>中文标准(当前标准)</option></StandardSelect>
                <DropArrow color="#a0a0a0" />
              </ComboWrap>
              <Gap />
              <StandardLabel htmlFor="std-to">到:</StandardLabel>
              <ComboWrap $width={160}>
                <StandardSelect id="std-to" disabled><option>中文标准(当前标准)</option></StandardSelect>
                <DropArrow color="#a0a0a0" />
              </ComboWrap>
            </LayerRow>
          </LayerGroup>
        </Pane>
      </Browser>
    </Client>
    <Highlight $x={107} $y={399} $w={546} $h={153} />
  </Dialog>
);

export default function App() {
  return (
    <Shell>
      <GlobalStyle />
      <Gradients />
      <TopStrip>
        <StripSegment $grow={345} />
        <StripSegment $grow={99} $blank />
        <StripSegment $grow={170} />
        <StripSegment $grow={204} />
        <StripSegment $grow={169} />
        <StripSegment $grow={12} />
      </TopStrip>
      <Body>
        <Palette>
          <PaletteHeader>
            <PaletteTitle>浩辰电气</PaletteTitle>
            <HeaderButton type="button" aria-label="固定"><Pin /></HeaderButton>
            <HeaderButton type="button" aria-label="关闭"><Cross w={1.6} /></HeaderButton>
          </PaletteHeader>
          <PaletteBody>
            <MenuScroll>
              {menuRows.map((m) => (
                <MenuRow key={m} type="button"><RowLabel>{m}</RowLabel><Caret /></MenuRow>
              ))}
              <MenuRow type="button" aria-expanded="true"><RowLabel>文件布图</RowLabel><Caret up /></MenuRow>
              <Commands>
                {commands.map((c) => (
                  <CommandItem key={c.label} $ruled={c.ruled}>
                    <CommandButton type="button">
                      <IconSlot><svg width="18" height="18" viewBox="0 0 18 18">{commandIcons[c.icon]}</svg></IconSlot>
                      {c.label}
                    </CommandButton>
                  </CommandItem>
                ))}
              </Commands>
              {categories.map((c) => (
                <CategoryButton key={c.label} type="button" $active={c.active}>
                  <svg width="26" height="23" viewBox="0 0 26 23">{c.art}</svg>
                  {c.label}
                </CategoryButton>
              ))}
            </MenuScroll>
          </PaletteBody>
        </Palette>
        <Workspace>
          <DrawingRow>
            <ToolStrip>
              <Grip />
              {tools.map((t) => (
                <ToolButton key={t.name} type="button" aria-label={t.name}>
                  <svg width="20" height="20" viewBox="0 0 20 20" fill="none" stroke="#3f5f94" strokeWidth="1.400">{t.art}</svg>
                </ToolButton>
              ))}
            </ToolStrip>
            <Sheet>
              <TabBar>
                <DrawingTab>
                  Drawing1
                  <TabClose type="button" aria-label="关闭图纸"><Cross w={2.6} /></TabClose>
                </DrawingTab>
              </TabBar>
              <Canvas>
                <Marks width="120" height="240" viewBox="0 0 120 240" fill="none" stroke="#e4e4e4">
                  <path d="M8 44.500H82M45.500 7V82M41.500 40.500H49.500V48.500H41.500z" />
                  <path d="M23.500 168V215M28 219.500H74M19.500 215.500H27.500V223.500H19.500z" />
                  <text x="22" y="162" fontFamily="Lato" fontWeight="300" fontSize="18" fill="#e4e4e4" stroke="none">Y</text>
                  <text x="80" y="220" fontFamily="Lato" fontWeight="300" fontSize="18" fill="#e4e4e4" stroke="none">X</text>
                </Marks>
              </Canvas>
              <LayoutBar>
                {navPaths.map((d, i) => (
                  <NavButton key={d} type="button" aria-label={navNames[i]}>
                    <svg width="11" height="11" viewBox="0 0 11 11"><path d={d} fill="currentColor" stroke="currentColor" strokeWidth="1" /></svg>
                  </NavButton>
                ))}
                <ModelTab type="button">模型</ModelTab>
                <LayoutTab type="button">
                  布局1
                  <TabEdge width="54" height="20" viewBox="0 0 54 20" fill="none" stroke="#8ea6c8"><path d="M0 11L4 19H43L53 1" /></TabEdge>
                </LayoutTab>
                <SheetScroll />
              </LayoutBar>
            </Sheet>
          </DrawingRow>
          <CommandWindow>
            <CommandGutter>
              <GutterButton type="button" aria-label="关闭命令行"><Cross w={1.6} /></GutterButton>
              <GutterButton type="button" aria-label="固定命令行"><Pin /></GutterButton>
            </CommandGutter>
            <CommandMain>
              <History>
                {history.map((h, i) => (
                  <Line key={i}><Prompt>命令</Prompt>:{h}</Line>
                ))}
              </History>
              <CommandInput type="text" aria-label="命令" />
            </CommandMain>
          </CommandWindow>
        </Workspace>
      </Body>
      <ExportDialog />
      <Highlight $x={2} $y={261} $w={155} $h={246} />
      <Highlight $x={12} $y={423} $w={127} $h={28} />
    </Shell>
  );
}
